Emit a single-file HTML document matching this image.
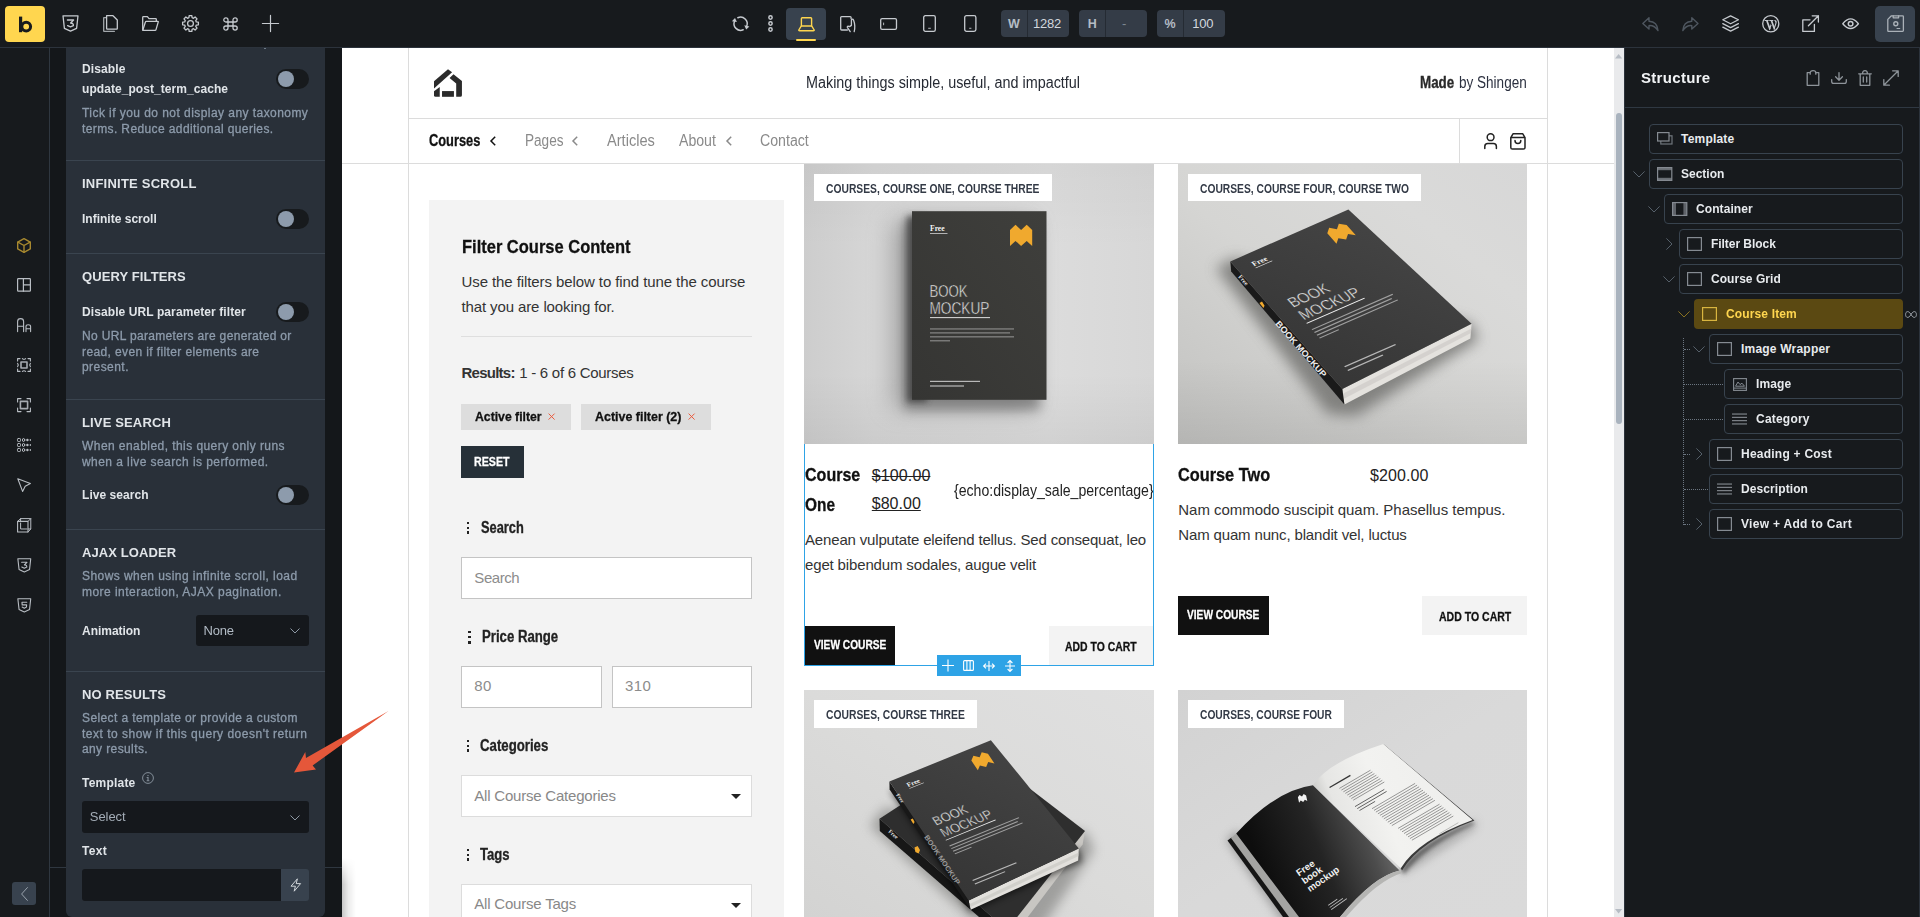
<!DOCTYPE html>
<html>
<head>
<meta charset="utf-8">
<title>Bricks Builder</title>
<style>
*{box-sizing:border-box;margin:0;padding:0}
html,body{width:1920px;height:917px;overflow:hidden;background:#fff}
body{position:relative;font-family:"Liberation Sans",sans-serif;font-size:13px;color:#e8ebee}
.a{position:absolute}
.t{position:absolute;white-space:nowrap}
svg{display:block;overflow:visible}
#toolbar{position:absolute;left:0;top:0;width:1920px;height:48px;background:#171a1d;border-bottom:1px solid #2c333c}
#side{position:absolute;left:0;top:48px;width:50px;height:869px;background:#171a1d;border-right:1px solid #2f3740}
#pwrap{position:absolute;left:50px;top:48px;width:292px;height:869px;background:#14171a}
#panel{position:absolute;left:66px;top:48px;width:259px;height:869px;background:#293039;border-radius:0 0 6px 6px}
#canvas{position:absolute;left:342px;top:48px;width:1272px;height:869px;background:#fff}
#scroll{position:absolute;left:1614px;top:48px;width:10px;height:869px;background:#e9ebee}
#struct{position:absolute;left:1624px;top:48px;width:296px;height:869px;background:#171a1d;border-left:1px solid #2c333c}
.gl{position:absolute;left:0;top:0;width:1920px;height:917px;will-change:transform}

</style>
</head>
<body>
<!-- canvas (site preview) -->
<div id="canvas"></div>
<div class="a" style="left:408px;top:48px;width:1px;height:869px;background:#dcdcdc;"></div>
<div class="a" style="left:1547px;top:48px;width:1px;height:869px;background:#dcdcdc;"></div>
<div class="a" style="left:408px;top:118px;width:1140px;height:1px;background:#dcdcdc;"></div>
<div class="a" style="left:342px;top:163px;width:1272px;height:1px;background:#dcdcdc;"></div>
<div class="a" style="left:1459px;top:118px;width:1px;height:46px;background:#dcdcdc;"></div>
<svg class="a" style="left:434px;top:69px;" width="28" height="28" viewBox="0 0 28 28"><g fill="#2b2b2b"><path d="M13.98 0.3 L18.1 3.3 L0 19.56 L0 12.23 Z"/><path d="M19.47 5.13 L27.94 12 V26.2 Q27.94 27.8 26.3 27.8 H22.2 V14.5 L15.58 9.03 Z"/><path d="M5.74 17.95 V27.8 H1.6 Q0 27.8 0 26.2 V22.3 Z"/><rect x="8.03" y="22.08" width="11.9" height="5.72"/></g></svg>
<div class="t" style="left:806.30px;top:72.16px;font-size:16px;line-height:21px;color:#262a33;transform:scaleX(0.8982);transform-origin:0 0;">Making things simple, useful, and impactful</div>
<div class="t" style="left:1419.80px;top:72.36px;font-size:16px;line-height:21px;font-weight:bold;color:#2a2a2a;transform:scaleX(0.8361);transform-origin:0 0;-webkit-text-stroke:.3px #2a2a2a;">Made</div>
<div class="t" style="left:1458.80px;top:72.36px;font-size:16px;line-height:21px;color:#2c3140;transform:scaleX(0.8456);transform-origin:0 0;">by Shingen</div>
<div class="t" style="left:429.40px;top:129.56px;font-size:16px;line-height:21px;font-weight:bold;color:#111;transform:scaleX(0.8027);transform-origin:0 0;-webkit-text-stroke:.3px #111;">Courses</div>
<svg class="a" style="left:489.6px;top:136px;" width="6" height="10" viewBox="0 0 6 10"><path d="M5.2 0.8 L1 5 L5.2 9.2" fill="none" stroke="#111" stroke-width="1.5"/></svg>
<div class="t" style="left:524.60px;top:129.56px;font-size:16px;line-height:21px;color:#8a8a8a;transform:scaleX(0.8485);transform-origin:0 0;">Pages</div>
<svg class="a" style="left:571.8px;top:136px;" width="6" height="10" viewBox="0 0 6 10"><path d="M5.2 0.8 L1 5 L5.2 9.2" fill="none" stroke="#8a8a8a" stroke-width="1.5"/></svg>
<div class="t" style="left:606.90px;top:129.56px;font-size:16px;line-height:21px;color:#8a8a8a;transform:scaleX(0.9132);transform-origin:0 0;">Articles</div>
<div class="t" style="left:679.40px;top:129.56px;font-size:16px;line-height:21px;color:#8a8a8a;transform:scaleX(0.8825);transform-origin:0 0;">About</div>
<svg class="a" style="left:725.6px;top:136px;" width="6" height="10" viewBox="0 0 6 10"><path d="M5.2 0.8 L1 5 L5.2 9.2" fill="none" stroke="#8a8a8a" stroke-width="1.5"/></svg>
<div class="t" style="left:760.20px;top:129.56px;font-size:16px;line-height:21px;color:#8a8a8a;transform:scaleX(0.8850);transform-origin:0 0;">Contact</div>
<svg class="a" style="left:1483.5px;top:133px;" width="13.2" height="16.4" viewBox="0 0 13.2 16.4"><circle cx="6.6" cy="4.2" r="3.4" fill="none" stroke="#222" stroke-width="1.5" stroke-linecap="round" stroke-linejoin="round"/><path d="M0.8 15.6 V13.4 Q0.8 10.4 3.8 10.4 H9.4 Q12.4 10.4 12.4 13.4 V15.6" fill="none" stroke="#222" stroke-width="1.5" stroke-linecap="round" stroke-linejoin="round"/></svg>
<svg class="a" style="left:1509.6px;top:133px;" width="15.8" height="16.8" viewBox="0 0 15.8 16.8"><path d="M0.8 4.6 L3 0.8 H12.8 L15 4.6 V14.4 Q15 16 13.4 16 H2.4 Q0.8 16 0.8 14.4 Z M0.8 4.6 H15" fill="none" stroke="#222" stroke-width="1.5" stroke-linecap="round" stroke-linejoin="round"/><path d="M5 7.4 Q5 10.4 7.9 10.4 Q10.8 10.4 10.8 7.4" fill="none" stroke="#222" stroke-width="1.5" stroke-linecap="round" stroke-linejoin="round"/></svg>
<div class="a" style="left:429px;top:200px;width:355px;height:717px;background:#f3f3f3;"></div>
<div class="t" style="left:461.50px;top:234.45px;font-size:19.2px;line-height:25px;font-weight:bold;color:#111;transform:scaleX(0.8590);transform-origin:0 0;-webkit-text-stroke:.3px #111;">Filter Course Content</div>
<div class="t" style="left:461.50px;top:271.80px;font-size:15px;line-height:20px;color:#333;letter-spacing:-0.086px;">Use the filters below to find tune the course</div>
<div class="t" style="left:461.50px;top:297.00px;font-size:15px;line-height:20px;color:#333;letter-spacing:-0.114px;">that you are looking for.</div>
<div class="a" style="left:461px;top:336px;width:291px;height:1px;background:#dedede;"></div>
<div class="t" style="left:461.50px;top:362.50px;font-size:15px;line-height:20px;font-weight:bold;color:#333;letter-spacing:-0.748px;">Results:</div>
<div class="t" style="left:519.30px;top:362.50px;font-size:15px;line-height:20px;color:#333;letter-spacing:-0.274px;">1 - 6 of 6 Courses</div>
<div class="a" style="left:461px;top:404px;width:110px;height:26px;background:#dddddd;"></div>
<div class="t" style="left:474.60px;top:408.10px;font-size:13px;line-height:17px;font-weight:bold;color:#111;transform:scaleX(0.9405);transform-origin:0 0;-webkit-text-stroke:.3px #111;">Active filter</div>
<svg class="a" style="left:548.4px;top:413.4px;" width="7.2" height="7.2" viewBox="0 0 7.2 7.2"><path d="M0.6 0.6 L6.6 6.6 M6.6 0.6 L0.6 6.6" fill="none" stroke="#ea5a3c" stroke-width="1"/></svg>
<div class="a" style="left:581px;top:404px;width:130px;height:26px;background:#dddddd;"></div>
<div class="t" style="left:594.60px;top:408.10px;font-size:13px;line-height:17px;font-weight:bold;color:#111;transform:scaleX(0.9567);transform-origin:0 0;-webkit-text-stroke:.3px #111;">Active filter (2)</div>
<svg class="a" style="left:688.4px;top:413.4px;" width="7.2" height="7.2" viewBox="0 0 7.2 7.2"><path d="M0.6 0.6 L6.6 6.6 M6.6 0.6 L0.6 6.6" fill="none" stroke="#ea5a3c" stroke-width="1"/></svg>
<div class="a" style="left:461px;top:446px;width:63px;height:32px;background:#263038;"></div>
<div class="t" style="left:474.30px;top:452.70px;font-size:13px;line-height:17px;font-weight:bold;color:#fff;transform:scaleX(0.8190);transform-origin:0 0;-webkit-text-stroke:.3px #fff;">RESET</div>
<div class="a" style="left:466.8px;top:521.5999999999999px;width:2.6px;height:2.5px;background:#222;"></div>
<div class="a" style="left:466.8px;top:526.5px;width:2.6px;height:2.5px;background:#222;"></div>
<div class="a" style="left:466.8px;top:531.3px;width:2.6px;height:2.5px;background:#222;"></div>
<div class="t" style="left:480.50px;top:516.76px;font-size:16px;line-height:21px;font-weight:bold;color:#222;transform:scaleX(0.8019);transform-origin:0 0;-webkit-text-stroke:.3px #222;">Search</div>
<div class="a" style="left:461px;top:557px;width:291px;height:42px;background:#fff;border:1px solid #c4c4c4;"></div>
<div class="t" style="left:474.30px;top:567.80px;font-size:15px;line-height:20px;color:#8c8c8c;letter-spacing:-0.422px;">Search</div>
<div class="a" style="left:468px;top:630.8px;width:2.6px;height:2.5px;background:#222;"></div>
<div class="a" style="left:468px;top:635.9px;width:2.6px;height:2.5px;background:#222;"></div>
<div class="a" style="left:468px;top:641.0px;width:2.6px;height:2.5px;background:#222;"></div>
<div class="t" style="left:482.30px;top:625.86px;font-size:16px;line-height:21px;font-weight:bold;color:#222;transform:scaleX(0.8239);transform-origin:0 0;-webkit-text-stroke:.3px #222;">Price Range</div>
<div class="a" style="left:461px;top:666px;width:141px;height:42px;background:#fff;border:1px solid #c4c4c4;"></div>
<div class="t" style="left:474.30px;top:676.30px;font-size:15px;line-height:20px;color:#8c8c8c;letter-spacing:0.306px;">80</div>
<div class="a" style="left:612px;top:666px;width:140px;height:42px;background:#fff;border:1px solid #c4c4c4;"></div>
<div class="t" style="left:625.00px;top:676.30px;font-size:15px;line-height:20px;color:#8c8c8c;letter-spacing:0.456px;">310</div>
<div class="a" style="left:466.8px;top:739.5999999999999px;width:2.6px;height:2.5px;background:#222;"></div>
<div class="a" style="left:466.8px;top:744.5px;width:2.6px;height:2.5px;background:#222;"></div>
<div class="a" style="left:466.8px;top:749.3px;width:2.6px;height:2.5px;background:#222;"></div>
<div class="t" style="left:480.40px;top:734.56px;font-size:16px;line-height:21px;font-weight:bold;color:#222;transform:scaleX(0.8258);transform-origin:0 0;-webkit-text-stroke:.3px #222;">Categories</div>
<div class="a" style="left:461px;top:775px;width:291px;height:42px;background:#fff;border:1px solid #dcdcdc;"></div>
<div class="t" style="left:474.30px;top:785.60px;font-size:15px;line-height:20px;color:#888;letter-spacing:-0.210px;">All Course Categories</div>
<svg class="a" style="left:731.2px;top:794px;" width="10" height="5" viewBox="0 0 10 5"><path d="M0 0 H10 L5 5 Z" fill="#222"/></svg>
<div class="a" style="left:466.8px;top:848.5999999999999px;width:2.6px;height:2.5px;background:#222;"></div>
<div class="a" style="left:466.8px;top:853.5px;width:2.6px;height:2.5px;background:#222;"></div>
<div class="a" style="left:466.8px;top:858.3px;width:2.6px;height:2.5px;background:#222;"></div>
<div class="t" style="left:480.40px;top:843.56px;font-size:16px;line-height:21px;font-weight:bold;color:#222;transform:scaleX(0.8187);transform-origin:0 0;-webkit-text-stroke:.3px #222;">Tags</div>
<div class="a" style="left:461px;top:884px;width:291px;height:42px;background:#fff;border:1px solid #dcdcdc;"></div>
<div class="t" style="left:474.30px;top:894.40px;font-size:15px;line-height:20px;color:#888;letter-spacing:-0.205px;">All Course Tags</div>
<svg class="a" style="left:731.2px;top:903px;" width="10" height="5" viewBox="0 0 10 5"><path d="M0 0 H10 L5 5 Z" fill="#222"/></svg>
<svg class="a" style="left:804px;top:164px;overflow:hidden" width="350" height="280" viewBox="0 0 350 280"><defs><linearGradient id="g1" x1="0" y1="0" x2="1" y2="0"><stop offset="0" stop-color="#cdcdcd"/><stop offset=".2" stop-color="#d6d6d6"/><stop offset=".7" stop-color="#dcdcdc"/><stop offset="1" stop-color="#d7d7d7"/></linearGradient>
<linearGradient id="v1" x1="0" y1="0" x2="0" y2="1"><stop offset="0" stop-color="#000" stop-opacity=".03"/><stop offset=".3" stop-color="#000" stop-opacity="0"/><stop offset=".75" stop-color="#000" stop-opacity="0"/><stop offset="1" stop-color="#000" stop-opacity=".05"/></linearGradient>
<linearGradient id="c1" x1="0" y1="1" x2="1" y2="0"><stop offset="0" stop-color="#353533"/><stop offset="1" stop-color="#3f3f3c"/></linearGradient>
<filter id="b1n" x="-80%" y="-20%" width="260%" height="140%"><feGaussianBlur stdDeviation="3.2"/></filter>
<filter id="b1w" x="-40%" y="-40%" width="180%" height="180%"><feGaussianBlur stdDeviation="12"/></filter>
<filter id="b1" x="-30%" y="-30%" width="160%" height="160%"><feGaussianBlur stdDeviation="6"/></filter></defs><rect width="350" height="280" fill="url(#g1)"/><rect width="350" height="280" fill="url(#v1)"/><rect x="88" y="58" width="140" height="186" fill="#777" filter="url(#b1w)" opacity=".5"/><rect x="100" y="56" width="136" height="190" fill="#6e6e6e" filter="url(#b1)" opacity=".7"/><rect x="103" y="52" width="20" height="186" fill="#3a3a3a" filter="url(#b1n)" opacity=".75"/><rect x="108" y="47.2" width="134.5" height="188.6" fill="url(#c1)"/><g transform="translate(108,47.2)"><text x="18" y="20" font-family="'Liberation Serif',serif" font-size="7.6" font-weight="bold" fill="#f4f4f4">Free</text><rect x="18" y="22" width="17.5" height="0.7" fill="#e8e8e8"/><polygon points="98.0,18.8 103.5,13.6 109.1,18.8 114.7,13.6 120.2,18.8 120.2,34.9 114.7,29.7 109.1,34.9 103.5,29.7 98.0,34.9" fill="#f0a92e"/><text x="17.4" y="85.4" font-family="'Liberation Sans',sans-serif" font-size="16.6" fill="#ececec" textLength="38.2" lengthAdjust="spacingAndGlyphs" stroke="#3a3a37" stroke-width=".45">BOOK</text><text x="17.4" y="102.8" font-family="'Liberation Sans',sans-serif" font-size="16.6" fill="#ececec" textLength="60" lengthAdjust="spacingAndGlyphs" stroke="#3a3a37" stroke-width=".45">MOCKUP</text><rect x="18" y="106" width="60" height="0.9" fill="#f0f0f0"/><rect x="18" y="117.20" width="84" height="1.1" fill="#c9c9c9" opacity=".6"/><rect x="18" y="121.15" width="80" height="1.1" fill="#c9c9c9" opacity=".6"/><rect x="18" y="125.10" width="84" height="1.1" fill="#c9c9c9" opacity=".6"/><rect x="18" y="129.05" width="20" height="1.1" fill="#c9c9c9" opacity=".6"/><rect x="18" y="169.6" width="50" height="1.2" fill="#d0d0d0" opacity=".85"/><rect x="18" y="174.2" width="34" height="1.2" fill="#d0d0d0" opacity=".85"/></g></svg>
<div class="a" style="left:814px;top:174px;width:238px;height:27px;background:#fff;"></div>
<div class="t" style="left:826.40px;top:180.74px;font-size:12px;line-height:16px;font-weight:bold;color:#333a46;transform:scaleX(0.8581);transform-origin:0 0;">COURSES, COURSE ONE, COURSE THREE</div>
<svg class="a" style="left:1178px;top:164px;overflow:hidden" width="349" height="280" viewBox="0 0 349 280"><defs><linearGradient id="g2" x1="0" y1="1" x2="1" y2="0"><stop offset="0" stop-color="#c2c2c0"/><stop offset=".45" stop-color="#d5d5d3"/><stop offset=".75" stop-color="#dadad9"/><stop offset="1" stop-color="#d7d7d7"/></linearGradient>
<linearGradient id="v2" x1="0" y1="0" x2="0" y2="1"><stop offset="0" stop-color="#000" stop-opacity="0"/><stop offset=".7" stop-color="#000" stop-opacity="0"/><stop offset="1" stop-color="#000" stop-opacity=".07"/></linearGradient>
<linearGradient id="c2" x1="0" y1="1" x2="0.6" y2="0"><stop offset="0" stop-color="#323232"/><stop offset="1" stop-color="#454545"/></linearGradient>
<filter id="b2" x="-30%" y="-30%" width="160%" height="160%"><feGaussianBlur stdDeviation="7"/></filter></defs><rect width="349" height="280" fill="url(#g2)"/><rect width="349" height="280" fill="url(#v2)"/><polygon points="38,104 150,250 178,252 300,176 294,160 56,94" fill="#6f6f6d" filter="url(#b2)" opacity=".8"/><polygon points="164.3,225.1 293.6,159.7 292.4,174.6 166.4,240.6" fill="#e4e2de"/><polygon points="164.3,230 293.6,164.5 293,169 165.4,235" fill="#c9c7c3" opacity=".6"/><polygon points="52.3,97.4 164.3,225.1 166.4,240.6 53.2,107.4" fill="#1a1a1a"/><polygon points="170.4,45.6 293.6,159.7 164.3,225.1 52.3,97.4" fill="url(#c2)"/><g transform="matrix(0.8781,-0.3851,0.5926,0.6757,52.3,97.4)"><g transform="scale(1.0,1.0)"><text x="16" y="16.4" font-family="'Liberation Serif',serif" font-size="8.4" font-weight="bold" fill="#f4f4f4">Free</text><rect x="16" y="18.6" width="19" height="0.8" fill="#ddd"/><polygon points="100.0,15.5 105.5,10.5 111.0,15.5 116.5,10.5 122.0,15.5 122.0,31.0 116.5,26.0 111.0,31.0 105.5,26.0 100.0,31.0" fill="#f0a92e"/><text x="18" y="79" font-family="'Liberation Sans',sans-serif" font-size="17.5" fill="#ececec" textLength="44" lengthAdjust="spacingAndGlyphs" stroke="#3a3a3a" stroke-width=".4">BOOK</text><text x="18" y="97.5" font-family="'Liberation Sans',sans-serif" font-size="17.5" fill="#ececec" textLength="66" lengthAdjust="spacingAndGlyphs" stroke="#3a3a3a" stroke-width=".4">MOCKUP</text><rect x="18" y="101.6" width="66" height="1.1" fill="#f0f0f0"/><rect x="18" y="110.50" width="92" height="1.4" fill="#c9c9c9" opacity=".7"/><rect x="18" y="114.70" width="88" height="1.4" fill="#c9c9c9" opacity=".7"/><rect x="18" y="118.90" width="92" height="1.4" fill="#c9c9c9" opacity=".7"/><rect x="18" y="123.10" width="22" height="1.4" fill="#c9c9c9" opacity=".7"/><rect x="18" y="165.5" width="58" height="1.5" fill="#d6d6d6" opacity=".8"/><rect x="18" y="170.9" width="40" height="1.5" fill="#d6d6d6" opacity=".8"/></g></g><g transform="translate(97,160) rotate(48.5)"><text x="0" y="0" font-family="'Liberation Sans',sans-serif" font-size="8.6" font-weight="bold" fill="#eee" textLength="72" lengthAdjust="spacingAndGlyphs">BOOK MOCKUP</text></g><g transform="translate(60,113) rotate(48.5)"><text x="0" y="0" font-family="'Liberation Serif',serif" font-size="6" font-weight="bold" fill="#eee">Free</text></g><polygon points="81.5,139 84,137.4 86.6,141.8 85.4,144 " fill="#f0a92e"/></svg>
<div class="a" style="left:1188px;top:174px;width:233px;height:27px;background:#fff;"></div>
<div class="t" style="left:1200.40px;top:180.74px;font-size:12px;line-height:16px;font-weight:bold;color:#333a46;transform:scaleX(0.8561);transform-origin:0 0;">COURSES, COURSE FOUR, COURSE TWO</div>
<svg class="a" style="left:804px;top:690px;overflow:hidden" width="350" height="227" viewBox="0 0 350 227"><defs><linearGradient id="g3" x1="0" y1="1" x2="1" y2="0"><stop offset="0" stop-color="#d3d3d2"/><stop offset=".5" stop-color="#dbdbda"/><stop offset="1" stop-color="#e0e0e0"/></linearGradient>
<linearGradient id="c3" x1="0" y1="1" x2="0.6" y2="0"><stop offset="0" stop-color="#323232"/><stop offset="1" stop-color="#444444"/></linearGradient>
<filter id="b3" x="-30%" y="-30%" width="160%" height="160%"><feGaussianBlur stdDeviation="6"/></filter>
<filter id="b3b" x="-30%" y="-30%" width="160%" height="160%"><feGaussianBlur stdDeviation="3"/></filter></defs><rect width="350" height="227" fill="url(#g3)"/><polygon points="66,136 190,250 230,250 290,160 282,142 80,118" fill="#80807e" filter="url(#b3)" opacity=".65"/><polygon points="281,141 278.6,154.5 214,240 200,240" fill="#c8c6c2"/><polygon points="75.5,128.7 178,62 281,141 203,240" fill="#2e2e2e"/><polygon points="75.5,128.7 203,240 190,240 75.8,141" fill="#171717"/><polygon points="85,100 166,222 278,172 276,160" fill="#000" filter="url(#b3b)" opacity=".55"/><g transform="translate(84,142) rotate(42)"><text font-family="'Liberation Serif',serif" font-size="5.6" font-weight="bold" fill="#e8e8e8">Free</text></g><polygon points="110.5,157.5 113.6,156 116,160 114.6,163.6 111.4,162" fill="#f0a92e"/><polygon points="164.6,210.4 274.8,158.4 274.2,170.4 166.6,219.8" fill="#e2e0dc"/><polygon points="164.6,214.6 274.8,162.6 274.6,166 165.6,217.6" fill="#c6c4c0" opacity=".6"/><polygon points="85.4,91.6 164.6,210.4 166.6,219.8 85.6,99.4" fill="#181818"/><polygon points="186.9,50.2 274.8,158.4 164.6,210.4 85.4,91.6" fill="url(#c3)"/><g transform="matrix(0.7546,-0.3078,0.4190,0.6286,85.4,91.6)"><text x="16" y="16.4" font-family="'Liberation Serif',serif" font-size="8.4" font-weight="bold" fill="#f4f4f4">Free</text><rect x="16" y="18.6" width="19" height="0.8" fill="#ddd"/><polygon points="100.0,15.5 105.5,10.5 111.0,15.5 116.5,10.5 122.0,15.5 122.0,31.0 116.5,26.0 111.0,31.0 105.5,26.0 100.0,31.0" fill="#f0a92e"/><text x="18" y="79" font-family="'Liberation Sans',sans-serif" font-size="17.5" fill="#ececec" textLength="44" lengthAdjust="spacingAndGlyphs" stroke="#3a3a3a" stroke-width=".4">BOOK</text><text x="18" y="97.5" font-family="'Liberation Sans',sans-serif" font-size="17.5" fill="#ececec" textLength="66" lengthAdjust="spacingAndGlyphs" stroke="#3a3a3a" stroke-width=".4">MOCKUP</text><rect x="18" y="101.6" width="66" height="1.1" fill="#f0f0f0"/><rect x="18" y="110.50" width="92" height="1.4" fill="#c9c9c9" opacity=".7"/><rect x="18" y="114.70" width="88" height="1.4" fill="#c9c9c9" opacity=".7"/><rect x="18" y="118.90" width="92" height="1.4" fill="#c9c9c9" opacity=".7"/><rect x="18" y="123.10" width="22" height="1.4" fill="#c9c9c9" opacity=".7"/><rect x="18" y="165.5" width="58" height="1.5" fill="#d6d6d6" opacity=".8"/><rect x="18" y="170.9" width="40" height="1.5" fill="#d6d6d6" opacity=".8"/></g><g transform="translate(120,147) rotate(56)"><text font-family="'Liberation Sans',sans-serif" font-size="7" font-weight="bold" fill="#9a9a9a" textLength="58" lengthAdjust="spacingAndGlyphs">BOOK MOCKUP</text></g><g transform="translate(92,105) rotate(56)"><text font-family="'Liberation Serif',serif" font-size="5" font-weight="bold" fill="#e8e8e8">Free</text></g><polygon points="106.6,129.6 108.8,128.4 110.6,132 109.4,134" fill="#f0a92e"/></svg>
<div class="a" style="left:814px;top:700px;width:163px;height:28px;background:#fff;"></div>
<div class="t" style="left:826.40px;top:706.74px;font-size:12px;line-height:16px;font-weight:bold;color:#333a46;transform:scaleX(0.8602);transform-origin:0 0;">COURSES, COURSE THREE</div>
<svg class="a" style="left:1178px;top:690px;overflow:hidden" width="349" height="227" viewBox="0 0 349 227"><defs><linearGradient id="g4" x1="0" y1="0" x2="1" y2="1"><stop offset="0" stop-color="#d2d2d2"/><stop offset=".5" stop-color="#d9d9d9"/><stop offset="1" stop-color="#dadada"/></linearGradient>
<linearGradient id="l4" gradientUnits="userSpaceOnUse" x1="80" y1="170" x2="205" y2="120"><stop offset="0" stop-color="#0d0d0d"/><stop offset=".45" stop-color="#242424"/><stop offset=".8" stop-color="#4c4c4c"/><stop offset="1" stop-color="#6e6e6e"/></linearGradient>
<linearGradient id="r4" gradientUnits="userSpaceOnUse" x1="140" y1="140" x2="270" y2="90"><stop offset="0" stop-color="#b9b9b7"/><stop offset=".18" stop-color="#e6e6e4"/><stop offset=".5" stop-color="#f2f2f0"/><stop offset="1" stop-color="#efefed"/></linearGradient>
<filter id="b4s" x="-30%" y="-30%" width="160%" height="160%"><feGaussianBlur stdDeviation="2.2"/></filter>
<filter id="b4" x="-30%" y="-30%" width="160%" height="160%"><feGaussianBlur stdDeviation="5"/></filter></defs><rect width="349" height="227" fill="url(#g4)"/><path d="M222 186 L297 138 L298 130 L230 172 Z" fill="#888" filter="url(#b4)" opacity=".7"/><path d="M48 150 L110 240 L130 240 L60 140 Z" fill="#777" filter="url(#b4)" opacity=".6"/><polygon points="49.5,150.4 53.5,147.6 112,227 105,227" fill="#151515"/><polygon points="53,148 58.4,143.6 122,227 111,227" fill="#a4a4a2"/><path d="M222.8 180 Q241 152 295 131.5 L296 134 Q246 158 226 184 Z" fill="#555" filter="url(#b4s)" opacity=".9"/><path d="M205.4 54 L296.4 130.6 Q242 151 224 180.4 L222.8 178.2 Z" fill="#3a3a3a"/><path d="M134.9 95.3 Q150 72 205.4 54 L294.6 130 Q240 150 222.8 178.2 Z" fill="url(#r4)"/><path d="M134.9 95.3 Q98 100 58.2 143.6 L121 227 L162 227 Q196 186 221.6 180.6 Z" fill="url(#l4)"/><path d="M162 227 Q196 186 221.6 180.6 L224 183 Q200 190 168 227 Z" fill="#b5b5b3"/><line x1="192.5" y1="80.2" x2="161.4" y2="98.4" stroke="#4a4a4a" stroke-width=".9" opacity="0.6"/><line x1="194.4" y1="81.9" x2="163.4" y2="100.1" stroke="#4a4a4a" stroke-width=".9" opacity="0.6"/><line x1="196.4" y1="83.6" x2="165.4" y2="101.8" stroke="#4a4a4a" stroke-width=".9" opacity="0.6"/><line x1="198.4" y1="85.2" x2="167.3" y2="103.4" stroke="#4a4a4a" stroke-width=".9" opacity="0.6"/><line x1="200.4" y1="86.9" x2="169.3" y2="105.1" stroke="#4a4a4a" stroke-width=".9" opacity="0.6"/><line x1="202.4" y1="88.6" x2="171.3" y2="106.8" stroke="#4a4a4a" stroke-width=".9" opacity="0.6"/><line x1="204.3" y1="90.3" x2="173.3" y2="108.5" stroke="#4a4a4a" stroke-width=".9" opacity="0.6"/><line x1="206.3" y1="92.0" x2="175.2" y2="110.2" stroke="#4a4a4a" stroke-width=".9" opacity="0.6"/><line x1="206.3" y1="99.4" x2="177.0" y2="116.6" stroke="#4a4a4a" stroke-width=".9" opacity="0.95"/><line x1="208.6" y1="101.4" x2="179.3" y2="118.6" stroke="#4a4a4a" stroke-width=".9" opacity="0.95"/><line x1="197.1" y1="111.4" x2="181.5" y2="120.5" stroke="#4a4a4a" stroke-width=".9" opacity="0.95"/><line x1="237.1" y1="93.4" x2="194.0" y2="118.7" stroke="#4a4a4a" stroke-width=".9" opacity="0.6"/><line x1="239.1" y1="95.1" x2="196.0" y2="120.4" stroke="#4a4a4a" stroke-width=".9" opacity="0.6"/><line x1="241.1" y1="96.8" x2="197.9" y2="122.1" stroke="#4a4a4a" stroke-width=".9" opacity="0.6"/><line x1="243.1" y1="98.5" x2="199.9" y2="123.8" stroke="#4a4a4a" stroke-width=".9" opacity="0.6"/><line x1="245.0" y1="100.2" x2="201.9" y2="125.4" stroke="#4a4a4a" stroke-width=".9" opacity="0.6"/><line x1="247.0" y1="101.9" x2="203.9" y2="127.1" stroke="#4a4a4a" stroke-width=".9" opacity="0.6"/><line x1="249.0" y1="103.5" x2="205.8" y2="128.8" stroke="#4a4a4a" stroke-width=".9" opacity="0.6"/><line x1="251.0" y1="105.2" x2="207.8" y2="130.5" stroke="#4a4a4a" stroke-width=".9" opacity="0.6"/><line x1="252.9" y1="106.9" x2="209.8" y2="132.2" stroke="#4a4a4a" stroke-width=".9" opacity="0.6"/><line x1="254.9" y1="108.6" x2="211.8" y2="133.9" stroke="#4a4a4a" stroke-width=".9" opacity="0.6"/><line x1="256.9" y1="110.3" x2="213.8" y2="135.6" stroke="#4a4a4a" stroke-width=".9" opacity="0.6"/><line x1="261.5" y1="114.2" x2="220.1" y2="138.4" stroke="#4a4a4a" stroke-width=".9" opacity="0.6"/><line x1="263.5" y1="115.9" x2="222.0" y2="140.1" stroke="#4a4a4a" stroke-width=".9" opacity="0.6"/><line x1="265.4" y1="117.6" x2="224.0" y2="141.8" stroke="#4a4a4a" stroke-width=".9" opacity="0.6"/><line x1="267.4" y1="119.2" x2="226.0" y2="143.5" stroke="#4a4a4a" stroke-width=".9" opacity="0.6"/><line x1="269.4" y1="120.9" x2="228.0" y2="145.2" stroke="#4a4a4a" stroke-width=".9" opacity="0.6"/><line x1="271.4" y1="122.6" x2="230.0" y2="146.9" stroke="#4a4a4a" stroke-width=".9" opacity="0.6"/><line x1="273.3" y1="124.3" x2="231.9" y2="148.6" stroke="#4a4a4a" stroke-width=".9" opacity="0.6"/><line x1="275.3" y1="126.0" x2="233.9" y2="150.2" stroke="#4a4a4a" stroke-width=".9" opacity="0.6"/><line x1="280.3" y1="132.7" x2="261.3" y2="143.8" stroke="#4a4a4a" stroke-width=".9" opacity="0.35"/><line x1="172.4" y1="85.4" x2="151.6" y2="97.5" stroke="#222" stroke-width="1.3" opacity=".9"/><g transform="translate(119.5,105.4) rotate(-12)"><polygon points="0.0,1.9 2.1,0.0 4.2,1.9 6.3,0.0 8.4,1.9 8.4,7.6 6.3,5.7 4.2,7.6 2.1,5.7 0.0,7.6" fill="#f2f2f2"/></g><g transform="translate(121,186.5) rotate(-35)"><text font-family="'Liberation Sans',sans-serif" font-size="9.6" font-weight="bold" fill="#f1f1f1"><tspan x="0" y="0">Free</tspan><tspan x="0" y="9.6">book</tspan><tspan x="0" y="19.2">mockup</tspan></text></g><g transform="translate(150,215) rotate(-35)"><rect width="11" height="0.9" fill="#bbb"/><rect y="2.6" width="16" height="0.9" fill="#bbb"/><rect y="5.2" width="19" height="0.9" fill="#bbb"/></g></svg>
<div class="a" style="left:1188px;top:700px;width:156px;height:28px;background:#fff;"></div>
<div class="t" style="left:1200.40px;top:706.74px;font-size:12px;line-height:16px;font-weight:bold;color:#333a46;transform:scaleX(0.8527);transform-origin:0 0;">COURSES, COURSE FOUR</div>
<div class="t" style="left:805.00px;top:463.66px;font-size:18px;line-height:23px;font-weight:bold;color:#111;transform:scaleX(0.8917);transform-origin:0 0;-webkit-text-stroke:.3px #111;">Course</div>
<div class="t" style="left:805.00px;top:493.66px;font-size:18px;line-height:23px;font-weight:bold;color:#111;transform:scaleX(0.8568);transform-origin:0 0;-webkit-text-stroke:.3px #111;">One</div>
<div class="t" style="left:871.80px;top:465.36px;font-size:16px;line-height:21px;color:#222;letter-spacing:0.108px;text-decoration:line-through;">$100.00</div>
<div class="t" style="left:871.80px;top:492.96px;font-size:16px;line-height:21px;color:#222;letter-spacing:0.010px;text-decoration:underline;">$80.00</div>
<div class="t" style="left:953.60px;top:479.86px;font-size:16px;line-height:21px;color:#222;transform:scaleX(0.8799);transform-origin:0 0;">{echo:display_sale_percentage}</div>
<div class="t" style="left:805.00px;top:530.00px;font-size:15px;line-height:20px;color:#333;letter-spacing:-0.162px;">Aenean vulputate eleifend tellus. Sed consequat, leo</div>
<div class="t" style="left:805.00px;top:555.10px;font-size:15px;line-height:20px;color:#333;letter-spacing:-0.148px;">eget bibendum sodales, augue velit</div>
<div class="a" style="left:805px;top:626px;width:90px;height:39px;background:#111;"></div>
<div class="t" style="left:813.70px;top:636.40px;font-size:13px;line-height:17px;font-weight:bold;color:#fff;transform:scaleX(0.7819);transform-origin:0 0;-webkit-text-stroke:.3px #fff;">VIEW COURSE</div>
<div class="a" style="left:1049px;top:626px;width:104px;height:39px;background:#f3f3f3;"></div>
<div class="t" style="left:1065.40px;top:638.30px;font-size:13px;line-height:17px;font-weight:bold;color:#111;transform:scaleX(0.8017);transform-origin:0 0;-webkit-text-stroke:.3px #111;">ADD TO CART</div>
<div class="t" style="left:1178.30px;top:463.66px;font-size:18px;line-height:23px;font-weight:bold;color:#111;transform:scaleX(0.9059);transform-origin:0 0;-webkit-text-stroke:.3px #111;">Course Two</div>
<div class="t" style="left:1369.90px;top:465.36px;font-size:16px;line-height:21px;color:#222;letter-spacing:0.108px;">$200.00</div>
<div class="t" style="left:1178.30px;top:500.00px;font-size:15px;line-height:20px;color:#333;letter-spacing:-0.031px;">Nam commodo suscipit quam. Phasellus tempus.</div>
<div class="t" style="left:1178.30px;top:525.10px;font-size:15px;line-height:20px;color:#333;letter-spacing:-0.149px;">Nam quam nunc, blandit vel, luctus</div>
<div class="a" style="left:1178px;top:596px;width:91px;height:39px;background:#111;"></div>
<div class="t" style="left:1186.70px;top:606.40px;font-size:13px;line-height:17px;font-weight:bold;color:#fff;transform:scaleX(0.7819);transform-origin:0 0;-webkit-text-stroke:.3px #fff;">VIEW COURSE</div>
<div class="a" style="left:1422px;top:596px;width:105px;height:39px;background:#f3f3f3;"></div>
<div class="t" style="left:1438.60px;top:608.30px;font-size:13px;line-height:17px;font-weight:bold;color:#111;transform:scaleX(0.8095);transform-origin:0 0;-webkit-text-stroke:.3px #111;">ADD TO CART</div>
<div class="a" style="left:804px;top:444px;width:350px;height:222px;border:1px solid #2ea3e6;border-top:0;"></div>
<div class="a" style="left:937px;top:655px;width:84px;height:21px;background:#2ea3e6;"></div>
<svg class="a" style="left:942px;top:659px;" width="12" height="13" viewBox="0 0 12 13"><path d="M6 0.5 V12.5 M0 6.5 H12" fill="none" stroke="#fff" stroke-width="1.1"/></svg>
<svg class="a" style="left:963px;top:660px;" width="11" height="11" viewBox="0 0 11 11"><rect x="0.6" y="0.6" width="9.8" height="9.8" rx="1" fill="none" stroke="#fff" stroke-width="1.1"/><path d="M3.9 0.6 V10.4 M7.1 0.6 V10.4" fill="none" stroke="#fff" stroke-width="1.1"/></svg>
<svg class="a" style="left:983px;top:660.5px;" width="12" height="10" viewBox="0 0 12 10"><path d="M0.6 5 H11.4 M3 2.6 L0.6 5 L3 7.4 M9 2.6 L11.4 5 L9 7.4 M6 0 V10" fill="none" stroke="#fff" stroke-width="1.1"/></svg>
<svg class="a" style="left:1005px;top:659.5px;" width="10" height="12" viewBox="0 0 10 12"><path d="M5 0.6 V11.4 M2.6 3 L5 0.6 L7.4 3 M2.6 9 L5 11.4 L7.4 9 M0 6 H10" fill="none" stroke="#fff" stroke-width="1.1"/></svg>
<div class="a" style="left:1614px;top:48px;width:10px;height:869px;background:#e9eaec;"></div>
<div class="a" style="left:1616px;top:113px;width:6px;height:311px;background:#a9b3be;border-radius:3px;"></div>
<svg class="a" style="left:1615.4px;top:53.5px;" width="7.2" height="4.6" viewBox="0 0 7.2 4.6"><path d="M3.6 0 L7.2 4.6 H0 Z" fill="#b6bcc4"/></svg>
<svg class="a" style="left:1615.4px;top:908.5px;" width="7.2" height="4.6" viewBox="0 0 7.2 4.6"><path d="M0 0 H7.2 L3.6 4.6 Z" fill="#b6bcc4"/></svg>

<!-- builder chrome -->
<div id="toolbar"></div>
<div id="side"></div>
<div id="pwrap"></div>
<div id="panel"></div>
<div id="struct"></div>
<div class="a" style="left:5px;top:6px;width:40px;height:36px;background:#ffd64f;border-radius:4px;"></div>
<svg class="a" style="left:18.6px;top:15.6px;" width="14" height="17" viewBox="0 0 14 17"><path d="M1.6 0.6 V16.2" stroke="#171a1d" stroke-width="3.2" fill="none"/><circle cx="7.2" cy="10.6" r="4.4" fill="none" stroke="#171a1d" stroke-width="3"/></svg>
<svg class="a" style="left:62px;top:15px;" width="17" height="17" viewBox="0 0 17 17"><g transform="scale(1.0)"><path d="M1 0.8 H16 L14.6 13.4 L8.5 16.2 L2.4 13.4 Z" fill="none" stroke="#c6cacf" stroke-width="1.3" stroke-linecap="round" stroke-linejoin="round"/><path d="M5.4 5 H11.6 L8.6 8 Q11.6 8 11.4 10.6 L8.5 11.9 L5.6 10.6" fill="none" stroke="#c6cacf" stroke-width="1.3" stroke-linecap="round" stroke-linejoin="round"/></g></svg>
<svg class="a" style="left:103px;top:15px;" width="15" height="17" viewBox="0 0 15 17"><path d="M3.4 2.6 H1 Q0.7 2.6 0.7 3 V16 Q0.7 16.3 1 16.3 H11.4" fill="none" stroke="#c6cacf" stroke-width="1.3" stroke-linecap="round" stroke-linejoin="round" opacity=".8"/><path d="M3.6 0.7 H10 L14.3 5 V13.6 Q14.3 14.2 13.7 14.2 H4.2 Q3.6 14.2 3.6 13.6 Z" fill="none" stroke="#c6cacf" stroke-width="1.3" stroke-linecap="round" stroke-linejoin="round"/></svg>
<svg class="a" style="left:142px;top:16px;" width="17" height="15" viewBox="0 0 17 15"><path d="M0.7 14 V1.4 Q0.7 0.7 1.4 0.7 H5.4 L7 2.6 H13.6 Q14.3 2.6 14.3 3.3 V5.2" fill="none" stroke="#c6cacf" stroke-width="1.3" stroke-linecap="round" stroke-linejoin="round"/><path d="M0.8 14.2 L3.4 6 Q3.6 5.3 4.3 5.3 H15.6 Q16.5 5.3 16.2 6.1 L14 13.6 Q13.8 14.3 13.1 14.3 H0.9" fill="none" stroke="#c6cacf" stroke-width="1.3" stroke-linecap="round" stroke-linejoin="round"/></svg>
<svg class="a" style="left:182px;top:15px;" width="17" height="17" viewBox="0 0 17 17"><path d="M6.90 2.72 L7.15 0.62 L9.85 0.62 L10.10 2.72 L11.46 3.28 L13.12 1.97 L15.03 3.88 L13.72 5.54 L14.28 6.90 L16.38 7.15 L16.38 9.85 L14.28 10.10 L13.72 11.46 L15.03 13.12 L13.12 15.03 L11.46 13.72 L10.10 14.28 L9.85 16.38 L7.15 16.38 L6.90 14.28 L5.54 13.72 L3.88 15.03 L1.97 13.12 L3.28 11.46 L2.72 10.10 L0.62 9.85 L0.62 7.15 L2.72 6.90 L3.28 5.54 L1.97 3.88 L3.88 1.97 L5.54 3.28 Z" fill="none" stroke="#c6cacf" stroke-width="1.3" stroke-linecap="round" stroke-linejoin="round"/><circle cx="8.5" cy="8.5" r="2.9" fill="none" stroke="#c6cacf" stroke-width="1.3" stroke-linecap="round" stroke-linejoin="round"/></svg>
<svg class="a" style="left:223px;top:16.5px;" width="15" height="14" viewBox="0 0 15 14"><path d="M5 5 H10 V9 H5 Z" fill="none" stroke="#c6cacf" stroke-width="1.3" stroke-linecap="round" stroke-linejoin="round"/><path d="M5 5 H2.9 A2.1 2.1 0 1 1 5 2.9 Z M10 5 V2.9 A2.1 2.1 0 1 1 12.1 5 Z M10 9 H12.1 A2.1 2.1 0 1 1 10 11.1 Z M5 9 V11.1 A2.1 2.1 0 1 1 2.9 9 Z" fill="none" stroke="#c6cacf" stroke-width="1.3" stroke-linecap="round" stroke-linejoin="round"/></svg>
<svg class="a" style="left:262px;top:15px;" width="17" height="17" viewBox="0 0 17 17"><path d="M8.5 0.4 V16.6 M0.4 8.5 H16.6" fill="none" stroke="#c6cacf" stroke-width="1.2" stroke-linecap="round" stroke-linejoin="round"/></svg>
<svg class="a" style="left:732px;top:15.8px;" width="17.5" height="15.5" viewBox="0 0 17.5 15.5"><path d="M5.81 1.72 A6.6 6.6 0 0 1 14.7 10.2 M11.18 13.78 A6.6 6.6 0 0 1 2.5 5.2" fill="none" stroke="#c6cacf" stroke-width="1.5" stroke-linecap="round" stroke-linejoin="round"/><polygon points="12.3,9.3 17.4,10.4 14.2,13.6" fill="#c6cacf"/><polygon points="-0.1,5.2 3.0,2.0 4.9,6.1" fill="#c6cacf"/></svg>
<svg class="a" style="left:767.9px;top:15.100000000000001px;" width="5" height="5" viewBox="0 0 5 5"><circle cx="2.5" cy="2.5" r="1.65" fill="none" stroke="#c6cacf" stroke-width="1.5" stroke-linecap="round" stroke-linejoin="round"/></svg>
<svg class="a" style="left:767.9px;top:21.0px;" width="5" height="5" viewBox="0 0 5 5"><circle cx="2.5" cy="2.5" r="1.65" fill="none" stroke="#c6cacf" stroke-width="1.5" stroke-linecap="round" stroke-linejoin="round"/></svg>
<svg class="a" style="left:767.9px;top:27.0px;" width="5" height="5" viewBox="0 0 5 5"><circle cx="2.5" cy="2.5" r="1.65" fill="none" stroke="#c6cacf" stroke-width="1.5" stroke-linecap="round" stroke-linejoin="round"/></svg>
<div class="a" style="left:786px;top:8px;width:40px;height:32px;background:#38424e;border-radius:4px;"></div>
<div class="a" style="left:796px;top:39px;width:20px;height:2px;background:#ffd64f;border-radius:1px;"></div>
<svg class="a" style="left:798px;top:16.5px;" width="17" height="14.5" viewBox="0 0 17 14.5"><path d="M3.4 9 V1.5 Q3.4 0.7 4.2 0.7 H12.8 Q13.6 0.7 13.6 1.5 V9 Z" fill="none" stroke="#ffd64f" stroke-width="1.4" stroke-linecap="round" stroke-linejoin="round"/><path d="M3.2 9.2 L0.8 13 Q0.6 13.8 1.6 13.8 H15.4 Q16.4 13.8 16.2 13 L13.8 9.2" fill="none" stroke="#ffd64f" stroke-width="1.4" stroke-linecap="round" stroke-linejoin="round"/></svg>
<svg class="a" style="left:839.5px;top:15.5px;" width="16" height="15.5" viewBox="0 0 16 15.5"><path d="M7.4 14 H1.6 Q0.7 14 0.7 13.1 V1.6 Q0.7 0.7 1.6 0.7 H10.2 Q11.1 0.7 11.1 1.6 V2.8" fill="none" stroke="#c6cacf" stroke-width="1.3" stroke-linecap="round" stroke-linejoin="round"/><path d="M10.2 15.6 L7.5 11.6 Q6.9 10.6 8 10.2 L9.6 10.6 L11.4 9.4 L11.4 4.4 Q11.4 3.2 12.4 3.2 Q13.2 3.2 13.6 4.2 Q15.6 9.4 14.2 15.6" fill="none" stroke="#c6cacf" stroke-width="1.3" stroke-linecap="round" stroke-linejoin="round"/></svg>
<svg class="a" style="left:879.7px;top:17.5px;" width="17.2" height="11.8" viewBox="0 0 17.2 11.8"><rect x="0.7" y="0.7" width="15.8" height="10.6" rx="1.4" fill="none" stroke="#c6cacf" stroke-width="1.3" stroke-linecap="round" stroke-linejoin="round"/><rect x="3.2" y="4.6" width="0.9" height="2.6" fill="#c6cacf"/></svg>
<svg class="a" style="left:923px;top:15px;" width="13" height="17" viewBox="0 0 13 17"><rect x="0.7" y="0.7" width="11.6" height="15.6" rx="1.6" fill="none" stroke="#c6cacf" stroke-width="1.3" stroke-linecap="round" stroke-linejoin="round"/><rect x="5.2" y="12.8" width="2.6" height="0.9" fill="#c6cacf"/></svg>
<svg class="a" style="left:964.3px;top:15px;" width="12.6" height="17" viewBox="0 0 12.6 17"><rect x="0.7" y="0.7" width="11.2" height="15.6" rx="1.8" fill="none" stroke="#c6cacf" stroke-width="1.3" stroke-linecap="round" stroke-linejoin="round"/><rect x="5.2" y="12.8" width="2.2" height="0.9" fill="#c6cacf"/></svg>
<div class="a" style="left:1001px;top:10px;width:68px;height:27px;background:#343c47;border-radius:4px;"></div>
<div class="a" style="left:1027px;top:10px;width:1px;height:27px;background:#252b33;"></div>
<div class="t" style="left:1008.00px;top:15.67px;font-size:12.5px;line-height:16px;font-weight:bold;color:#b4bcc5;letter-spacing:-0.512px;">W</div>
<div class="t" style="left:1033.00px;top:15.40px;font-size:13px;line-height:17px;color:#d2d8de;letter-spacing:-0.230px;">1282</div>
<div class="a" style="left:1079px;top:10px;width:68px;height:27px;background:#343c47;border-radius:4px;"></div>
<div class="a" style="left:1105px;top:10px;width:1px;height:27px;background:#252b33;"></div>
<div class="t" style="left:1087.70px;top:15.67px;font-size:12.5px;line-height:16px;font-weight:bold;color:#b4bcc5;letter-spacing:-0.431px;">H</div>
<div class="t" style="left:1122.00px;top:15.40px;font-size:13px;line-height:17px;color:#7d8792;letter-spacing:0.256px;">-</div>
<div class="a" style="left:1157px;top:10px;width:68px;height:27px;background:#343c47;border-radius:4px;"></div>
<div class="a" style="left:1183px;top:10px;width:1px;height:27px;background:#252b33;"></div>
<div class="t" style="left:1164.50px;top:15.67px;font-size:12.5px;line-height:16px;font-weight:bold;color:#b4bcc5;letter-spacing:-0.725px;">%</div>
<div class="t" style="left:1192.20px;top:15.40px;font-size:13px;line-height:17px;color:#d2d8de;letter-spacing:-0.168px;">100</div>
<svg class="a" style="left:1642px;top:16.6px;" width="17" height="14.4" viewBox="0 0 17 14.4"><path d="M7 0.8 L0.8 6.4 L7 12 V8.6 Q12.6 8.2 16 13.6 Q15.4 4.6 7 4.2 Z" fill="none" stroke="#4e565f" stroke-width="1.4" stroke-linecap="round" stroke-linejoin="round"/></svg>
<svg class="a" style="left:1682px;top:16.6px;" width="17" height="14.4" viewBox="0 0 17 14.4"><g transform="translate(16.8,0) scale(-1,1)"><path d="M7 0.8 L0.8 6.4 L7 12 V8.6 Q12.6 8.2 16 13.6 Q15.4 4.6 7 4.2 Z" fill="none" stroke="#4e565f" stroke-width="1.4" stroke-linecap="round" stroke-linejoin="round"/></g></svg>
<svg class="a" style="left:1722px;top:14.8px;" width="17.2" height="17.2" viewBox="0 0 17.2 17.2"><path d="M8.6 0.8 L16.4 4.8 L8.6 8.8 L0.8 4.8 Z" fill="none" stroke="#c6cacf" stroke-width="1.3" stroke-linecap="round" stroke-linejoin="round"/><path d="M0.8 8.6 L8.6 12.6 L16.4 8.6" fill="none" stroke="#c6cacf" stroke-width="1.3" stroke-linecap="round" stroke-linejoin="round"/><path d="M0.8 12.2 L8.6 16.2 L16.4 12.2" fill="none" stroke="#c6cacf" stroke-width="1.3" stroke-linecap="round" stroke-linejoin="round"/></svg>
<svg class="a" style="left:1761.7px;top:14.8px;" width="17.5" height="17.5" viewBox="0 0 17.5 17.5"><circle cx="8.75" cy="8.75" r="8.05" fill="none" stroke="#c6cacf" stroke-width="1.3" stroke-linecap="round" stroke-linejoin="round"/><g fill="#c6cacf"><polygon points="2.6,5 6.6,5 6.6,5.9 5.9,5.9 8.6,13.4 7.5,15.4 4.1,5.9 2.6,5.9"/><polygon points="7.3,5 11.3,5 11.3,5.9 10.5,5.9 13.2,13.4 12.1,15.4 8.7,5.9 7.3,5.9"/><polygon points="8.7,9 9.4,10.6 7.9,14.9 7.2,13.6"/><path d="M12.2 5 Q14.4 4.6 14.7 6.6 Q14.8 7.6 14.3 9 L12.6 14 L11.9 12.4 L13.3 8.6 Q13.7 7.2 12.9 6.3 Q12.4 5.8 12.2 5 Z"/></g></svg>
<svg class="a" style="left:1802px;top:14.8px;" width="17.2" height="17.2" viewBox="0 0 17.2 17.2"><path d="M12.4 9.4 V16.4 H0.8 V4.8 H8" fill="none" stroke="#c6cacf" stroke-width="1.3" stroke-linecap="round" stroke-linejoin="round"/><path d="M6.4 10.8 L16.4 0.8 M10.2 0.8 H16.4 V7" fill="none" stroke="#c6cacf" stroke-width="1.3" stroke-linecap="round" stroke-linejoin="round"/></svg>
<svg class="a" style="left:1841.8px;top:17.8px;" width="17.2" height="11.4" viewBox="0 0 17.2 11.4"><path d="M0.8 5.7 Q8.6 -4 16.4 5.7 Q8.6 15.4 0.8 5.7 Z" fill="none" stroke="#c6cacf" stroke-width="1.4" stroke-linecap="round" stroke-linejoin="round"/><circle cx="8.6" cy="5.7" r="2.3" fill="none" stroke="#c6cacf" stroke-width="1.5" stroke-linecap="round" stroke-linejoin="round"/></svg>
<div class="a" style="left:1875px;top:6px;width:40px;height:36px;background:#38424e;border-radius:5px;"></div>
<svg class="a" style="left:1887px;top:14.8px;" width="17.2" height="17.2" viewBox="0 0 17.2 17.2"><path d="M4.4 0.8 H15.6 Q16.4 0.8 16.4 1.6 V15.6 Q16.4 16.4 15.6 16.4 H1.6 Q0.8 16.4 0.8 15.6 V4.4 Z" fill="none" stroke="#aab1b8" stroke-width="1.3" stroke-linecap="round" stroke-linejoin="round"/><path d="M6.2 0.8 V2.8 H11.6 V0.8" fill="none" stroke="#aab1b8" stroke-width="1.3" stroke-linecap="round" stroke-linejoin="round"/><circle cx="8.8" cy="8.8" r="2" fill="none" stroke="#aab1b8" stroke-width="1.4" stroke-linecap="round" stroke-linejoin="round"/><rect x="9.6" y="13" width="3.6" height="1" fill="#aab1b8"/></svg>

<svg class="a" style="left:17px;top:237.5px;" width="14" height="15" viewBox="0 0 14 15"><path d="M7 0.7 L13.3 4.1 V10.9 L7 14.3 L0.7 10.9 V4.1 Z" fill="none" stroke="#a8892f" stroke-width="1.4" stroke-linecap="round" stroke-linejoin="round"/><path d="M0.9 4.2 L7 7.5 L13.1 4.2 M7 7.5 V14.2" fill="none" stroke="#a8892f" stroke-width="1.4" stroke-linecap="round" stroke-linejoin="round"/></svg>
<svg class="a" style="left:17px;top:278.3px;" width="14" height="13.8" viewBox="0 0 14 13.8"><rect x="0.6" y="0.6" width="12.8" height="12.6" rx="0.8" fill="none" stroke="#b9bec4" stroke-width="1.2" stroke-linecap="round" stroke-linejoin="round"/><path d="M6.4 0.6 V13.2 M6.4 6.9 H13.4" fill="none" stroke="#b9bec4" stroke-width="1.2" stroke-linecap="round" stroke-linejoin="round"/></svg>
<svg class="a" style="left:17px;top:318px;" width="14.5" height="14" viewBox="0 0 14.5 14"><path d="M0.6 13.6 V3.4 Q0.6 0.6 3.6 0.6 Q6.6 0.6 6.6 3.4 V13.6 M0.6 8.2 H6.6" fill="none" stroke="#b9bec4" stroke-width="1.1" stroke-linecap="round" stroke-linejoin="round"/><path d="M9 13.6 V8.6 Q9 6.8 11.2 6.8 Q13.6 6.8 13.6 8.6 V13.6 M9 10.8 H13.6" fill="none" stroke="#b9bec4" stroke-width="1.1" stroke-linecap="round" stroke-linejoin="round"/></svg>
<svg class="a" style="left:17px;top:358.4px;" width="14" height="14" viewBox="0 0 14 14"><rect x="4" y="4" width="6" height="6" fill="none" stroke="#a6abb1" stroke-width="1.6" stroke-linecap="round" stroke-linejoin="round"/><path d="M0.6 3 V0.6 H3 M5.4 0.6 Q7 2 8.6 0.6 M11 0.6 H13.4 V3 M13.4 5.4 Q12 7 13.4 8.6 M13.4 11 V13.4 H11 M8.6 13.4 Q7 12 5.4 13.4 M3 13.4 H0.6 V11 M0.6 8.6 Q2 7 0.6 5.4" fill="none" stroke="#b9bec4" stroke-width="1.1" stroke-linecap="round" stroke-linejoin="round"/></svg>
<svg class="a" style="left:17px;top:397.8px;" width="14" height="14.2" viewBox="0 0 14 14.2"><rect x="3.4" y="3.4" width="7.2" height="7.2" fill="none" stroke="#a6abb1" stroke-width="1.6" stroke-linecap="round" stroke-linejoin="round"/><path d="M0.6 4 V0.6 H4 M10 0.6 H13.4 V4 M13.4 10 V13.6 H10 M4 13.6 H0.6 V10" fill="none" stroke="#b9bec4" stroke-width="1.1" stroke-linecap="round" stroke-linejoin="round"/></svg>
<svg class="a" style="left:17px;top:438.4px;" width="14" height="14" viewBox="0 0 14 14"><rect x="0.5" y="0.5" width="3" height="3" rx="0.8" fill="none" stroke="#b9bec4" stroke-width="1" stroke-linecap="round" stroke-linejoin="round"/><ellipse cx="6.6" cy="2" rx="1.2" ry="1.5" fill="none" stroke="#b9bec4" stroke-width="1" stroke-linecap="round" stroke-linejoin="round"/><ellipse cx="10.4" cy="2" rx="1.2" ry="1.2" fill="#b9bec4"/><rect x="12.8" y="1" width="1" height="2" fill="#b9bec4"/><rect x="0.5" y="5.5" width="3" height="3" rx="0.8" fill="none" stroke="#b9bec4" stroke-width="1" stroke-linecap="round" stroke-linejoin="round"/><ellipse cx="6.6" cy="7" rx="1.2" ry="1.5" fill="none" stroke="#b9bec4" stroke-width="1" stroke-linecap="round" stroke-linejoin="round"/><ellipse cx="10.4" cy="7" rx="1.2" ry="1.2" fill="#b9bec4"/><rect x="12.8" y="6" width="1" height="2" fill="#b9bec4"/><rect x="0.5" y="10.5" width="3" height="3" rx="0.8" fill="none" stroke="#b9bec4" stroke-width="1" stroke-linecap="round" stroke-linejoin="round"/><ellipse cx="6.6" cy="12" rx="1.2" ry="1.5" fill="none" stroke="#b9bec4" stroke-width="1" stroke-linecap="round" stroke-linejoin="round"/><ellipse cx="10.4" cy="12" rx="1.2" ry="1.2" fill="#b9bec4"/><rect x="12.8" y="11" width="1" height="2" fill="#b9bec4"/></svg>
<svg class="a" style="left:17px;top:478px;" width="14.2" height="14.2" viewBox="0 0 14.2 14.2"><path d="M0.8 0.8 L13.4 5.6 L8.2 8.2 L5.6 13.4 Z" fill="none" stroke="#b9bec4" stroke-width="1.1" stroke-linecap="round" stroke-linejoin="round"/></svg>
<svg class="a" style="left:17px;top:518px;" width="14.4" height="14.8" viewBox="0 0 14.4 14.8"><rect x="0.6" y="3.4" width="10.4" height="10.6" fill="none" stroke="#b9bec4" stroke-width="1.1" stroke-linecap="round" stroke-linejoin="round"/><path d="M0.6 3.4 L3.6 0.6 H13.8 V11 L11 14 M11 3.4 L13.8 0.6 M3.6 0.6 V3.4 M3.6 5 V11 H9.6 M11 11 H13.6" fill="none" stroke="#b9bec4" stroke-width="1" stroke-linecap="round" stroke-linejoin="round"/></svg>
<svg class="a" style="left:17px;top:557.6px;" width="14.6" height="14.6" viewBox="0 0 14.6 14.6"><g transform="scale(0.8588235294117647)"><path d="M1 0.8 H16 L14.6 13.4 L8.5 16.2 L2.4 13.4 Z" fill="none" stroke="#b9bec4" stroke-width="1.2808219178082194" stroke-linecap="round" stroke-linejoin="round"/><path d="M5.4 5 H11.6 L8.6 8 Q11.6 8 11.4 10.6 L8.5 11.9 L5.6 10.6" fill="none" stroke="#b9bec4" stroke-width="1.2808219178082194" stroke-linecap="round" stroke-linejoin="round"/></g></svg>
<svg class="a" style="left:17px;top:598px;" width="14.6" height="14.6" viewBox="0 0 14.6 14.6"><g transform="scale(0.8588235294117647)"><path d="M1 0.8 H16 L14.6 13.4 L8.5 16.2 L2.4 13.4 Z" fill="none" stroke="#b9bec4" stroke-width="1.2808219178082194" stroke-linecap="round" stroke-linejoin="round"/><path d="M11.4 5 H5.8 L6 8 H11.2 L11 10.6 L8.5 11.8 L6 10.6" fill="none" stroke="#b9bec4" stroke-width="1.2808219178082194" stroke-linecap="round" stroke-linejoin="round"/></g></svg>
<div class="a" style="left:12px;top:882px;width:24px;height:23px;background:#38424e;border-radius:3px;"></div>
<svg class="a" style="left:21px;top:886.5px;" width="7" height="14" viewBox="0 0 7 14"><path d="M6.4 0.6 L0.6 7 L6.4 13.4" fill="none" stroke="#9aa3ad" stroke-width="1" stroke-linecap="round" stroke-linejoin="round"/></svg>

<div class="gl">
<div class="a" style="left:264px;top:48px;width:2px;height:1px;background:#6f7b88;"></div>
<div class="t" style="left:82.00px;top:60.84px;font-size:12px;line-height:16px;font-weight:bold;color:#e1e5e9;letter-spacing:0.116px;">Disable</div>
<div class="t" style="left:82.00px;top:80.84px;font-size:12px;line-height:16px;font-weight:bold;color:#e1e5e9;letter-spacing:0.058px;">update_post_term_cache</div>
<div class="a" style="left:276px;top:69px;width:33px;height:20px;background:#171a1d;border-radius:10px;"><div class="a" style="left:2px;top:2px;width:16px;height:16px;border-radius:8px;background:#8d9bac"></div></div>
<div class="t" style="left:82.00px;top:104.84px;font-size:12px;line-height:16px;color:#8d9bab;letter-spacing:0.444px;-webkit-text-stroke:.3px #8d9bab;">Tick if you do not display any taxonomy</div>
<div class="t" style="left:82.00px;top:120.64px;font-size:12px;line-height:16px;color:#8d9bab;letter-spacing:0.386px;-webkit-text-stroke:.3px #8d9bab;">terms. Reduce additional queries.</div>
<div class="a" style="left:66px;top:160px;width:259px;height:1px;background:#3a444f;"></div>
<div class="t" style="left:82.00px;top:175.00px;font-size:13px;line-height:17px;font-weight:bold;color:#e1e5e9;letter-spacing:0.225px;">INFINITE SCROLL</div>
<div class="t" style="left:82.00px;top:210.84px;font-size:12px;line-height:16px;font-weight:bold;color:#e1e5e9;letter-spacing:0.007px;">Infinite scroll</div>
<div class="a" style="left:276px;top:209px;width:33px;height:20px;background:#171a1d;border-radius:10px;"><div class="a" style="left:2px;top:2px;width:16px;height:16px;border-radius:8px;background:#8d9bac"></div></div>
<div class="a" style="left:66px;top:253px;width:259px;height:1px;background:#3a444f;"></div>
<div class="t" style="left:82.00px;top:268.00px;font-size:13px;line-height:17px;font-weight:bold;color:#e1e5e9;letter-spacing:0.113px;">QUERY FILTERS</div>
<div class="t" style="left:82.00px;top:304.14px;font-size:12px;line-height:16px;font-weight:bold;color:#e1e5e9;letter-spacing:0.094px;">Disable URL parameter filter</div>
<div class="a" style="left:276px;top:302px;width:33px;height:20px;background:#171a1d;border-radius:10px;"><div class="a" style="left:2px;top:2px;width:16px;height:16px;border-radius:8px;background:#8d9bac"></div></div>
<div class="t" style="left:82.00px;top:327.84px;font-size:12px;line-height:16px;color:#8d9bab;letter-spacing:0.334px;-webkit-text-stroke:.3px #8d9bab;">No URL parameters are generated or</div>
<div class="t" style="left:82.00px;top:343.54px;font-size:12px;line-height:16px;color:#8d9bab;letter-spacing:0.383px;-webkit-text-stroke:.3px #8d9bab;">read, even if filter elements are</div>
<div class="t" style="left:82.00px;top:359.04px;font-size:12px;line-height:16px;color:#8d9bab;letter-spacing:0.443px;-webkit-text-stroke:.3px #8d9bab;">present.</div>
<div class="a" style="left:66px;top:399px;width:259px;height:1px;background:#3a444f;"></div>
<div class="t" style="left:82.00px;top:414.00px;font-size:13px;line-height:17px;font-weight:bold;color:#e1e5e9;letter-spacing:0.145px;">LIVE SEARCH</div>
<div class="t" style="left:82.00px;top:438.14px;font-size:12px;line-height:16px;color:#8d9bab;letter-spacing:0.438px;-webkit-text-stroke:.3px #8d9bab;">When enabled, this query only runs</div>
<div class="t" style="left:82.00px;top:453.84px;font-size:12px;line-height:16px;color:#8d9bab;letter-spacing:0.430px;-webkit-text-stroke:.3px #8d9bab;">when a live search is performed.</div>
<div class="t" style="left:82.00px;top:486.84px;font-size:12px;line-height:16px;font-weight:bold;color:#e1e5e9;letter-spacing:0.050px;">Live search</div>
<div class="a" style="left:276px;top:485px;width:33px;height:20px;background:#171a1d;border-radius:10px;"><div class="a" style="left:2px;top:2px;width:16px;height:16px;border-radius:8px;background:#8d9bac"></div></div>
<div class="a" style="left:66px;top:529px;width:259px;height:1px;background:#3a444f;"></div>
<div class="t" style="left:82.00px;top:544.00px;font-size:13px;line-height:17px;font-weight:bold;color:#e1e5e9;letter-spacing:0.092px;">AJAX LOADER</div>
<div class="t" style="left:82.00px;top:568.14px;font-size:12px;line-height:16px;color:#8d9bab;letter-spacing:0.440px;-webkit-text-stroke:.3px #8d9bab;">Shows when using infinite scroll, load</div>
<div class="t" style="left:82.00px;top:583.84px;font-size:12px;line-height:16px;color:#8d9bab;letter-spacing:0.461px;-webkit-text-stroke:.3px #8d9bab;">more interaction, AJAX pagination.</div>
<div class="t" style="left:82.00px;top:622.84px;font-size:12px;line-height:16px;font-weight:bold;color:#e1e5e9;letter-spacing:-0.030px;">Animation</div>
<div class="a" style="left:196px;top:615px;width:113px;height:31px;background:#15181c;border-radius:3px;"></div>
<div class="t" style="left:203.60px;top:622.00px;font-size:13px;line-height:17px;color:#b3bcc6;letter-spacing:-0.270px;">None</div>
<svg class="a" style="left:290px;top:628px;" width="10" height="6" viewBox="0 0 10 6"><path d="M0.5 0.5 L5 5 L9.5 0.5" fill="none" stroke="#8d98a4" stroke-width="1"/></svg>
<div class="a" style="left:66px;top:671px;width:259px;height:1px;background:#3a444f;"></div>
<div class="t" style="left:82.00px;top:686.00px;font-size:13px;line-height:17px;font-weight:bold;color:#e1e5e9;letter-spacing:0.117px;">NO RESULTS</div>
<div class="t" style="left:82.00px;top:709.94px;font-size:12px;line-height:16px;color:#8d9bab;letter-spacing:0.388px;-webkit-text-stroke:.3px #8d9bab;">Select a template or provide a custom</div>
<div class="t" style="left:82.00px;top:725.64px;font-size:12px;line-height:16px;color:#8d9bab;letter-spacing:0.496px;-webkit-text-stroke:.3px #8d9bab;">text to show if this query doesn't return</div>
<div class="t" style="left:82.00px;top:741.34px;font-size:12px;line-height:16px;color:#8d9bab;letter-spacing:0.387px;-webkit-text-stroke:.3px #8d9bab;">any results.</div>
<div class="t" style="left:82.00px;top:774.84px;font-size:12px;line-height:16px;font-weight:bold;color:#e1e5e9;letter-spacing:0.213px;">Template</div>
<svg class="a" style="left:142px;top:772px;" width="12" height="12" viewBox="0 0 12 12"><circle cx="6" cy="6" r="5.4" fill="none" stroke="#8d98a4" stroke-width="0.9"/><rect x="5.5" y="5" width="1" height="4" fill="#8d98a4"/><rect x="5.5" y="3" width="1" height="1.1" fill="#8d98a4"/><rect x="4.6" y="8.4" width="2.8" height="0.8" fill="#8d98a4"/><rect x="4.6" y="5" width="1.4" height="0.8" fill="#8d98a4"/></svg>
<div class="a" style="left:82px;top:801px;width:227px;height:32px;background:#15181c;border-radius:3px;"></div>
<div class="t" style="left:89.80px;top:808.00px;font-size:13px;line-height:17px;color:#a3acb6;letter-spacing:-0.057px;">Select</div>
<svg class="a" style="left:290px;top:814.5px;" width="10" height="6" viewBox="0 0 10 6"><path d="M0.5 0.5 L5 5 L9.5 0.5" fill="none" stroke="#8d98a4" stroke-width="1"/></svg>
<div class="t" style="left:82.00px;top:842.84px;font-size:12px;line-height:16px;font-weight:bold;color:#e1e5e9;letter-spacing:0.301px;">Text</div>
<div class="a" style="left:82px;top:869px;width:199px;height:32px;background:#15181c;border-radius:3px 0 0 3px;"></div>
<div class="a" style="left:281px;top:869px;width:28px;height:32px;background:#38424e;border-radius:0 3px 3px 0;"></div>
<svg class="a" style="left:289.6px;top:878.4px;" width="11.6" height="14" viewBox="0 0 11.6 14"><path d="M7.4 0.8 L1 8.2 L5.4 8.2 L4.2 13.2 L10.6 5.6 L6.2 5.6 Z" fill="none" stroke="#e0e4e8" stroke-width="0.9" stroke-linejoin="round"/></svg>
</div>
<div class="t" style="left:1641.00px;top:67.80px;font-size:15px;line-height:20px;font-weight:bold;color:#f2f4f6;letter-spacing:0.312px;">Structure</div>
<div class="a" style="left:1625px;top:107px;width:295px;height:1px;background:#2f3842;"></div>
<svg class="a" style="left:1806px;top:70px;" width="14" height="16" viewBox="0 0 14 16"><path d="M4 2.6 H1.2 V15.3 H12.8 V2.6 H10" fill="none" stroke="#8e949a" stroke-width="1.3" stroke-linecap="round" stroke-linejoin="round"/><path d="M4.2 4.2 V2.8 Q4.2 0.7 7 0.7 Q9.8 0.7 9.8 2.8 V4.2" fill="none" stroke="#8e949a" stroke-width="1.3" stroke-linecap="round" stroke-linejoin="round"/></svg>
<svg class="a" style="left:1831px;top:72px;" width="16" height="12" viewBox="0 0 16 12"><path d="M8 0.6 V8 M4.6 4.8 L8 8.2 L11.4 4.8" fill="none" stroke="#8e949a" stroke-width="1.3" stroke-linecap="round" stroke-linejoin="round"/><path d="M0.7 7.6 V9.4 Q0.7 11.3 2.6 11.3 H13.4 Q15.3 11.3 15.3 9.4 V7.6" fill="none" stroke="#8e949a" stroke-width="1.3" stroke-linecap="round" stroke-linejoin="round"/></svg>
<svg class="a" style="left:1858px;top:70px;" width="14" height="16" viewBox="0 0 14 16"><path d="M0.7 3.8 H13.3 M2.2 3.8 V15.3 H11.8 V3.8 M4.6 3.6 Q4.6 0.7 7 0.7 Q9.4 0.7 9.4 3.6 M5.3 7 V12 M8.7 7 V12" fill="none" stroke="#8e949a" stroke-width="1.3" stroke-linecap="round" stroke-linejoin="round"/></svg>
<svg class="a" style="left:1883px;top:70px;" width="16" height="16" viewBox="0 0 16 16"><path d="M1 15 L15 1 M9.6 0.8 H15.2 V6.4 M0.8 9.6 V15.2 H6.4" fill="none" stroke="#8e949a" stroke-width="1.3" stroke-linecap="round" stroke-linejoin="round"/></svg>
<div class="a" style="left:1649px;top:124px;width:254px;height:30px;background:#171a1d;border:1px solid #38434e;border-radius:4px;"></div>
<svg class="a" style="left:1657px;top:132px;" width="16" height="13" viewBox="0 0 16 13"><rect x="3.8" y="3.8" width="11.2" height="8.2" fill="none" stroke="#6f757c" stroke-width="1.2"/><rect x="0.6" y="0.6" width="11.4" height="8.4" fill="#171a1d" stroke="#858b92" stroke-width="1.2"/></svg>
<div class="t" style="left:1681.00px;top:131.04px;font-size:12px;line-height:16px;font-weight:bold;color:#e8ebee;letter-spacing:0.200px;">Template</div>
<div class="a" style="left:1649px;top:159px;width:254px;height:30px;background:#171a1d;border:1px solid #38434e;border-radius:4px;"></div>
<svg class="a" style="left:1657px;top:167px;" width="16" height="14" viewBox="0 0 16 14"><rect x="0.6" y="0.6" width="14.2" height="12.8" fill="none" stroke="#858b92" stroke-width="1.2"/><rect x="0.6" y="0.6" width="14.2" height="2.6" fill="#858b92" opacity=".75"/><rect x="0.6" y="10.8" width="14.2" height="2.6" fill="#858b92" opacity=".75"/></svg>
<div class="t" style="left:1681.00px;top:166.04px;font-size:12px;line-height:16px;font-weight:bold;color:#e8ebee;letter-spacing:-0.006px;">Section</div>
<svg class="a" style="left:1632.5px;top:171px;" width="12" height="6.5" viewBox="0 0 12 6.5"><path d="M0.4 0.4 L6 6 L11.6 0.4" fill="none" stroke="#56606a" stroke-width="1"/></svg>
<div class="a" style="left:1664px;top:194px;width:239px;height:30px;background:#171a1d;border:1px solid #38434e;border-radius:4px;"></div>
<svg class="a" style="left:1672px;top:202px;" width="16" height="14" viewBox="0 0 16 14"><rect x="0.6" y="0.6" width="14.2" height="12.8" fill="none" stroke="#858b92" stroke-width="1.2"/><rect x="0.6" y="0.6" width="3.4" height="12.8" fill="#858b92" opacity=".65"/><rect x="11.4" y="0.6" width="3.4" height="12.8" fill="#858b92" opacity=".65"/></svg>
<div class="t" style="left:1696.00px;top:201.04px;font-size:12px;line-height:16px;font-weight:bold;color:#e8ebee;letter-spacing:0.076px;">Container</div>
<svg class="a" style="left:1647.5px;top:206px;" width="12" height="6.5" viewBox="0 0 12 6.5"><path d="M0.4 0.4 L6 6 L11.6 0.4" fill="none" stroke="#56606a" stroke-width="1"/></svg>
<div class="a" style="left:1679px;top:229px;width:224px;height:30px;background:#171a1d;border:1px solid #38434e;border-radius:4px;"></div>
<svg class="a" style="left:1687px;top:237px;" width="15" height="14" viewBox="0 0 15 14"><rect x="0.6" y="0.6" width="13.8" height="12.8" fill="none" stroke="#858b92" stroke-width="1.2"/></svg>
<div class="t" style="left:1711.00px;top:236.04px;font-size:12px;line-height:16px;font-weight:bold;color:#e8ebee;letter-spacing:-0.047px;">Filter Block</div>
<svg class="a" style="left:1665.5px;top:238px;" width="6.5" height="12" viewBox="0 0 6.5 12"><path d="M0.4 0.4 L6 6 L0.4 11.6" fill="none" stroke="#56606a" stroke-width="1"/></svg>
<div class="a" style="left:1679px;top:264px;width:224px;height:30px;background:#171a1d;border:1px solid #38434e;border-radius:4px;"></div>
<svg class="a" style="left:1687px;top:272px;" width="15" height="14" viewBox="0 0 15 14"><rect x="0.6" y="0.6" width="13.8" height="12.8" fill="none" stroke="#858b92" stroke-width="1.2"/></svg>
<div class="t" style="left:1711.00px;top:271.04px;font-size:12px;line-height:16px;font-weight:bold;color:#e8ebee;letter-spacing:0.040px;">Course Grid</div>
<svg class="a" style="left:1662.5px;top:276px;" width="12" height="6.5" viewBox="0 0 12 6.5"><path d="M0.4 0.4 L6 6 L11.6 0.4" fill="none" stroke="#56606a" stroke-width="1"/></svg>
<div class="a" style="left:1694px;top:299px;width:209px;height:30px;background:#5b4912;border-radius:4px;"></div>
<svg class="a" style="left:1702px;top:307px;" width="15" height="14" viewBox="0 0 15 14"><rect x="0.6" y="0.6" width="13.8" height="12.8" fill="none" stroke="#d9b53f" stroke-width="1.2"/></svg>
<div class="t" style="left:1726.00px;top:306.04px;font-size:12px;line-height:16px;font-weight:bold;color:#ffd64f;letter-spacing:0.140px;">Course Item</div>
<svg class="a" style="left:1677.5px;top:311px;" width="12" height="6.5" viewBox="0 0 12 6.5"><path d="M0.4 0.4 L6 6 L11.6 0.4" fill="none" stroke="#8a7220" stroke-width="1"/></svg>
<div class="a" style="left:1683px;top:338px;width:1px;height:187px;border-left:1px dotted #6b7580;"></div>
<div class="a" style="left:1684px;top:349px;width:6px;height:1px;border-top:1px dotted #6b7580;"></div>
<div class="a" style="left:1684px;top:384px;width:39px;height:1px;border-top:1px dotted #6b7580;"></div>
<div class="a" style="left:1684px;top:419px;width:39px;height:1px;border-top:1px dotted #6b7580;"></div>
<div class="a" style="left:1684px;top:454px;width:6px;height:1px;border-top:1px dotted #6b7580;"></div>
<div class="a" style="left:1684px;top:489px;width:24px;height:1px;border-top:1px dotted #6b7580;"></div>
<div class="a" style="left:1684px;top:524px;width:6px;height:1px;border-top:1px dotted #6b7580;"></div>
<div class="a" style="left:1709px;top:334px;width:194px;height:30px;background:#171a1d;border:1px solid #38434e;border-radius:4px;"></div>
<svg class="a" style="left:1717px;top:342px;" width="15" height="14" viewBox="0 0 15 14"><rect x="0.6" y="0.6" width="13.8" height="12.8" fill="none" stroke="#858b92" stroke-width="1.2"/></svg>
<div class="t" style="left:1741.00px;top:341.04px;font-size:12px;line-height:16px;font-weight:bold;color:#e8ebee;letter-spacing:0.209px;">Image Wrapper</div>
<svg class="a" style="left:1692.5px;top:346px;" width="12" height="6.5" viewBox="0 0 12 6.5"><path d="M0.4 0.4 L6 6 L11.6 0.4" fill="none" stroke="#56606a" stroke-width="1"/></svg>
<div class="a" style="left:1724px;top:369px;width:179px;height:30px;background:#171a1d;border:1px solid #38434e;border-radius:4px;"></div>
<svg class="a" style="left:1733px;top:377.5px;" width="14" height="13" viewBox="0 0 14 13"><rect x="0.6" y="0.6" width="12.8" height="11.8" fill="none" stroke="#858b92" stroke-width="1.1"/><path d="M2.5 8.2 L5 4 L7 6.6 L9 5.2 L11.5 8.2 Z" fill="none" stroke="#858b92" stroke-width="1"/><rect x="1" y="9.6" width="12" height="1" fill="#858b92"/></svg>
<div class="t" style="left:1756.00px;top:376.04px;font-size:12px;line-height:16px;font-weight:bold;color:#e8ebee;letter-spacing:0.122px;">Image</div>
<div class="a" style="left:1724px;top:404px;width:179px;height:30px;background:#171a1d;border:1px solid #38434e;border-radius:4px;"></div>
<svg class="a" style="left:1732px;top:413px;" width="15" height="12" viewBox="0 0 15 12"><rect x="0" y="0.5" width="15" height="1.1" fill="#858b92"/><rect x="0" y="3.8" width="15" height="1.1" fill="#858b92"/><rect x="0" y="7.1" width="15" height="1.1" fill="#858b92"/><rect x="0" y="10.4" width="15" height="1.1" fill="#858b92"/></svg>
<div class="t" style="left:1756.00px;top:411.04px;font-size:12px;line-height:16px;font-weight:bold;color:#e8ebee;letter-spacing:0.211px;">Category</div>
<div class="a" style="left:1709px;top:439px;width:194px;height:30px;background:#171a1d;border:1px solid #38434e;border-radius:4px;"></div>
<svg class="a" style="left:1717px;top:447px;" width="15" height="14" viewBox="0 0 15 14"><rect x="0.6" y="0.6" width="13.8" height="12.8" fill="none" stroke="#858b92" stroke-width="1.2"/></svg>
<div class="t" style="left:1741.00px;top:446.04px;font-size:12px;line-height:16px;font-weight:bold;color:#e8ebee;letter-spacing:0.237px;">Heading + Cost</div>
<svg class="a" style="left:1695.5px;top:448px;" width="6.5" height="12" viewBox="0 0 6.5 12"><path d="M0.4 0.4 L6 6 L0.4 11.6" fill="none" stroke="#56606a" stroke-width="1"/></svg>
<div class="a" style="left:1709px;top:474px;width:194px;height:30px;background:#171a1d;border:1px solid #38434e;border-radius:4px;"></div>
<svg class="a" style="left:1717px;top:483px;" width="15" height="12" viewBox="0 0 15 12"><rect x="0" y="0.5" width="15" height="1.1" fill="#858b92"/><rect x="0" y="3.8" width="15" height="1.1" fill="#858b92"/><rect x="0" y="7.1" width="15" height="1.1" fill="#858b92"/><rect x="0" y="10.4" width="15" height="1.1" fill="#858b92"/></svg>
<div class="t" style="left:1741.00px;top:481.04px;font-size:12px;line-height:16px;font-weight:bold;color:#e8ebee;letter-spacing:0.089px;">Description</div>
<div class="a" style="left:1709px;top:509px;width:194px;height:30px;background:#171a1d;border:1px solid #38434e;border-radius:4px;"></div>
<svg class="a" style="left:1717px;top:517px;" width="15" height="14" viewBox="0 0 15 14"><rect x="0.6" y="0.6" width="13.8" height="12.8" fill="none" stroke="#858b92" stroke-width="1.2"/></svg>
<div class="t" style="left:1741.00px;top:516.04px;font-size:12px;line-height:16px;font-weight:bold;color:#e8ebee;letter-spacing:0.295px;">View + Add to Cart</div>
<svg class="a" style="left:1695.5px;top:518px;" width="6.5" height="12" viewBox="0 0 6.5 12"><path d="M0.4 0.4 L6 6 L0.4 11.6" fill="none" stroke="#56606a" stroke-width="1"/></svg>
<svg class="a" style="left:1905px;top:310.5px;" width="12" height="7" viewBox="0 0 12 7"><path d="M6 3.5 C4.6 1.2 3.6 0.6 2.6 0.6 C1.3 0.6 0.6 1.9 0.6 3.5 C0.6 5.1 1.3 6.4 2.6 6.4 C3.6 6.4 4.6 5.8 6 3.5 C7.4 1.2 8.4 0.6 9.4 0.6 C10.7 0.6 11.4 1.9 11.4 3.5 C11.4 5.1 10.7 6.4 9.4 6.4 C8.4 6.4 7.4 5.8 6 3.5 Z" fill="none" stroke="#a0a6ac" stroke-width="1"/></svg>
<div class="a" style="left:1919px;top:48px;width:1px;height:869px;background:#2c333c;"></div>

<div class="a" style="left:50px;top:867px;width:16px;height:1px;background:#2f3740;"></div>
<div class="a" style="left:325px;top:867px;width:17px;height:1px;background:#2f3740;"></div>
<div class="a" style="left:342px;top:858px;width:14px;height:59px;background:linear-gradient(to right,rgba(0,0,0,.22),rgba(0,0,0,.08) 45%,rgba(0,0,0,0));-webkit-mask-image:linear-gradient(to bottom,transparent,#000 45%);mask-image:linear-gradient(to bottom,transparent,#000 45%);"></div>
<svg class="a" style="left:280px;top:700px;" width="120" height="80" viewBox="0 0 120 80"><path d="M108.5 11 L26 58 L25.3 52 L14 72.4 L36 69.5 L32.6 65.6 Z" fill="#e5573a"/></svg>

</body>
</html>
